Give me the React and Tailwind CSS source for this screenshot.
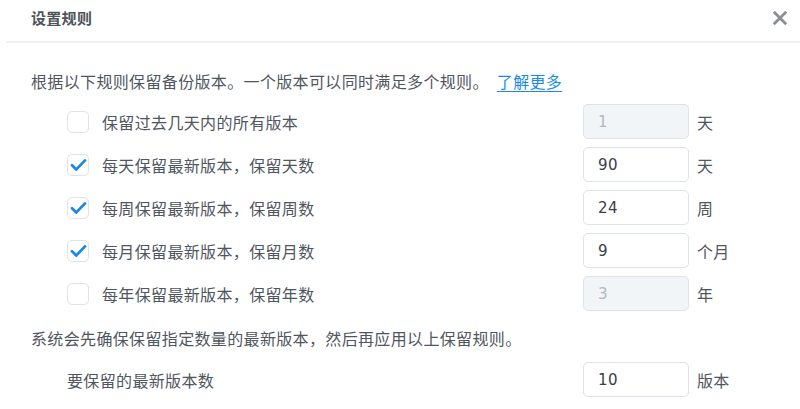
import React, { useState } from "react";

const font = { fontFamily: '"Noto Sans CJK SC", "Noto Sans", sans-serif' };

const rulesInit = [
  { label: "保留过去几天内的所有版本", value: "1", unit: "天", checked: false },
  { label: "每天保留最新版本，保留天数", value: "90", unit: "天", checked: true },
  { label: "每周保留最新版本，保留周数", value: "24", unit: "周", checked: true },
  { label: "每月保留最新版本，保留月数", value: "9", unit: "个月", checked: true },
  { label: "每年保留最新版本，保留年数", value: "3", unit: "年", checked: false },
];

const Checkbox = ({ checked, onClick }) => (
  <button
    type="button"
    onClick={onClick}
    className="w-[22px] h-[22px] rounded-[5px] border border-[#dde3ea] bg-white flex items-center justify-center shrink-0"
  >
    {checked && (
      <svg width="17" height="14" viewBox="0 0 17 14" fill="none">
        <path
          d="M2 7.2 L6.3 11.4 L15 2.4"
          stroke="#1c87e5"
          strokeWidth="2.8"
          strokeLinecap="round"
          strokeLinejoin="round"
        />
      </svg>
    )}
  </button>
);

const NumberInput = ({ value, disabled, onChange }) => (
  <input
    type="text"
    value={value}
    disabled={disabled}
    onChange={onChange}
    className={`w-[106px] h-[35px] rounded-[5px] border border-[#dde3ea] px-[14px] text-[15px] outline-none ${
      disabled ? "bg-[#f2f5f8] text-[#b4b9bf]" : "bg-white text-[#3a4048]"
    }`}
    style={{ fontFamily: '"DejaVu Sans", "Noto Sans", sans-serif' }}
  />
);

const App = () => {
  const [rules, setRules] = useState(rulesInit);
  const [keep, setKeep] = useState("10");

  const toggle = (i) => {
    const next = [...rules];
    next[i] = { ...next[i], checked: !next[i].checked };
    setRules(next);
  };

  const setValue = (i, v) => {
    const next = [...rules];
    next[i] = { ...next[i], value: v };
    setRules(next);
  };

  return (
    <div className="w-[800px] h-[409px] bg-white overflow-hidden" style={font}>
      {/* Header */}
      <div className="h-[41px] flex items-center justify-between pl-[31px] pr-[13px]">
        <h1 className="text-[15px] font-bold text-[#4d535a] leading-none tracking-[0.3px] -mt-[6px]">
          设置规则
        </h1>
        <button type="button" className="-mt-[6px]">
          <svg width="14" height="14" viewBox="0 0 14 14">
            <path
              d="M1.8 1.8 L12.2 12.2 M12.2 1.8 L1.8 12.2"
              stroke="#8a8f95"
              strokeWidth="2.8"
              strokeLinecap="square"
            />
          </svg>
        </button>
      </div>
      <div className="ml-[6px] h-[2px] bg-[#eef1f5]" />

      <div className="px-[31px] pt-[26px] text-[#4f5660] tracking-[0.35px]">
        <p className="text-[16px] leading-[24px]">
          根据以下规则保留备份版本。一个版本可以同时满足多个规则。
          <a href="#" className="ml-[8px] text-[#1a8ae6] underline underline-offset-[3px]">
            了解更多
          </a>
        </p>

        <div className="mt-[7px]">
          {rules.map((rule, i) => (
            <div
              key={i}
              className="h-[43px] grid grid-cols-[552px_106px_auto] items-center"
            >
              <div className="flex items-center gap-[13px] pl-[36px]">
                <Checkbox checked={rule.checked} onClick={() => toggle(i)} />
                <span className="text-[16px]">{rule.label}</span>
              </div>
              <NumberInput
                value={rule.value}
                disabled={!rule.checked}
                onChange={(e) => setValue(i, e.target.value)}
              />
              <span className="ml-[8px] text-[16px]">{rule.unit}</span>
            </div>
          ))}
        </div>

        <p className="mt-[11px] text-[16px] leading-[24px]">
          系统会先确保保留指定数量的最新版本，然后再应用以上保留规则。
        </p>

        <div className="mt-[8px] h-[43px] grid grid-cols-[552px_106px_auto] items-center">
          <span className="pl-[36px] text-[16px]">要保留的最新版本数</span>
          <NumberInput value={keep} onChange={(e) => setKeep(e.target.value)} />
          <span className="ml-[8px] text-[16px]">版本</span>
        </div>
      </div>
    </div>
  );
};

export default App;
